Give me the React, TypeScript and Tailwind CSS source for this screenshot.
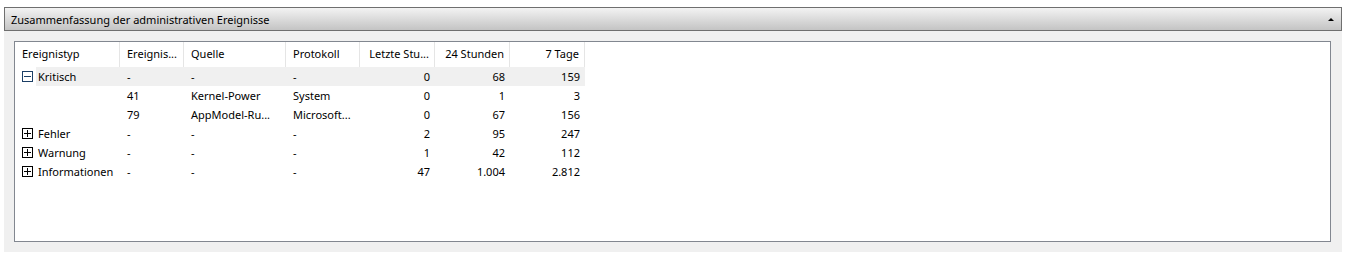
const columns = [
  { label: "Ereignistyp", width: "w-[105px]", right: false },
  { label: "Ereignis...", width: "w-[64px]", right: false },
  { label: "Quelle", width: "w-[102px]", right: false },
  { label: "Protokoll", width: "w-[74px]", right: false },
  { label: "Letzte Stu...", width: "w-[75px]", right: true },
  { label: "24 Stunden", width: "w-[75px]", right: true },
  { label: "7 Tage", width: "w-[75px]", right: true },
];

type Row = {
  type?: string;
  expander?: "plus" | "minus";
  id: string;
  source: string;
  log: string;
  hour: string;
  day: string;
  week: string;
  selected?: boolean;
};

const rows: Row[] = [
  { type: "Kritisch", expander: "minus", id: "-", source: "-", log: "-", hour: "0", day: "68", week: "159", selected: true },
  { id: "41", source: "Kernel-Power", log: "System", hour: "0", day: "1", week: "3" },
  { id: "79", source: "AppModel-Ru...", log: "Microsoft...", hour: "0", day: "67", week: "156" },
  { type: "Fehler", expander: "plus", id: "-", source: "-", log: "-", hour: "2", day: "95", week: "247" },
  { type: "Warnung", expander: "plus", id: "-", source: "-", log: "-", hour: "1", day: "42", week: "112" },
  { type: "Informationen", expander: "plus", id: "-", source: "-", log: "-", hour: "47", day: "1.004", week: "2.812" },
];

function Expander({ kind }: { kind: "plus" | "minus" }) {
  const color = kind === "minus" ? "#1c3f66" : "#000000";
  return (
    <svg width="11" height="11" viewBox="0 0 11 11" className="shrink-0">
      <rect x="0.5" y="0.5" width="10" height="10" fill="white" stroke={color} />
      <line x1="2" y1="5.5" x2="9" y2="5.5" stroke={color} />
      {kind === "plus" && <line x1="5.5" y1="2" x2="5.5" y2="9" stroke={color} />}
    </svg>
  );
}

export default function App() {
  return (
    <div
      className="w-[1346px] h-[258px] bg-white pt-[7px] pl-[4px] text-[11px] text-black"
      style={{ fontFamily: '"Noto Sans", "Open Sans", sans-serif' }}
    >
      <div className="w-[1338px] h-[24px] border border-[#6f6f6f] bg-gradient-to-b from-[#f3f3f3] to-[#c4c4c4] flex items-center justify-between pl-[6px] pr-[7px]">
        <span className="leading-none">Zusammenfassung der administrativen Ereignisse</span>
        <span className="w-0 h-0 border-l-[3px] border-r-[3px] border-b-[3px] border-l-transparent border-r-transparent border-b-black" />
      </div>
      <div className="w-[1338px] h-[221px] bg-[#f0f0f0] pt-[10px] pl-[10px]">
        <div className="w-[1317px] h-[201px] border border-[#828790] bg-white">
          <div className="flex h-[25px]">
            {columns.map((c) => (
              <div
                key={c.label}
                className={`${c.width} h-full border-r border-[#e5e5e5] flex items-center ${c.right ? "justify-end pr-[5px]" : "pl-[7px]"}`}
              >
                {c.label}
              </div>
            ))}
          </div>
          {rows.map((r, i) => (
            <div key={i} className="flex h-[19px] items-center">
              <div className="w-[21px] h-full flex items-center pl-[7px]">
                {r.expander && <Expander kind={r.expander} />}
              </div>
              <div className={`flex h-full items-center pt-[1px] ${r.selected ? "bg-[#f0f0f0]" : ""}`}>
                <div className="w-[84px] pl-[2px]">{r.type}</div>
                <div className="w-[64px] pl-[7px]">{r.id}</div>
                <div className="w-[102px] pl-[7px]">{r.source}</div>
                <div className="w-[74px] pl-[7px]">{r.log}</div>
                <div className="w-[75px] pr-[5px] text-right">{r.hour}</div>
                <div className="w-[75px] pr-[5px] text-right">{r.day}</div>
                <div className="w-[75px] pr-[5px] text-right">{r.week}</div>
              </div>
            </div>
          ))}
        </div>
      </div>
    </div>
  );
}
